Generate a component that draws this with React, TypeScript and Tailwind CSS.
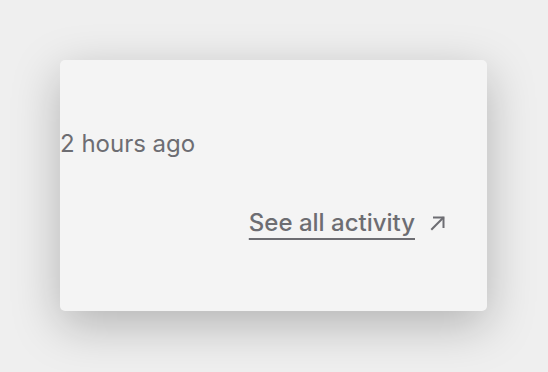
export default function App() {
  return (
    <div className="min-h-[372px] w-[548px] bg-[#efefef] pt-[60px] pl-[60px]" style={{ fontFamily: "Inter, 'Noto Sans', sans-serif" }}>
      <div className="flex h-[251px] w-[427px] flex-col rounded-[5px] bg-[#f4f4f4] shadow-[0_14px_48px_rgba(0,0,0,0.25)]">
        <div className="mt-[69px] text-[24px] leading-[30px] text-[#6d6d72]">2 hours ago</div>
        <div className="mt-[49px] flex items-center justify-end pr-[40px]">
          <a href="#" className="text-[24px] font-medium leading-[30px] text-[#6d6d72] underline decoration-2 underline-offset-[7px]">
            See all activity
          </a>
          <svg className="ml-[14px]" width="18" height="18" viewBox="0 0 18 18" fill="none" stroke="#6d6d72" strokeWidth="2" strokeLinecap="square">
            <path d="M3 15 L14 4" />
            <path d="M5 3.5 H14.5 V13" />
          </svg>
        </div>
      </div>
    </div>
  );
}
